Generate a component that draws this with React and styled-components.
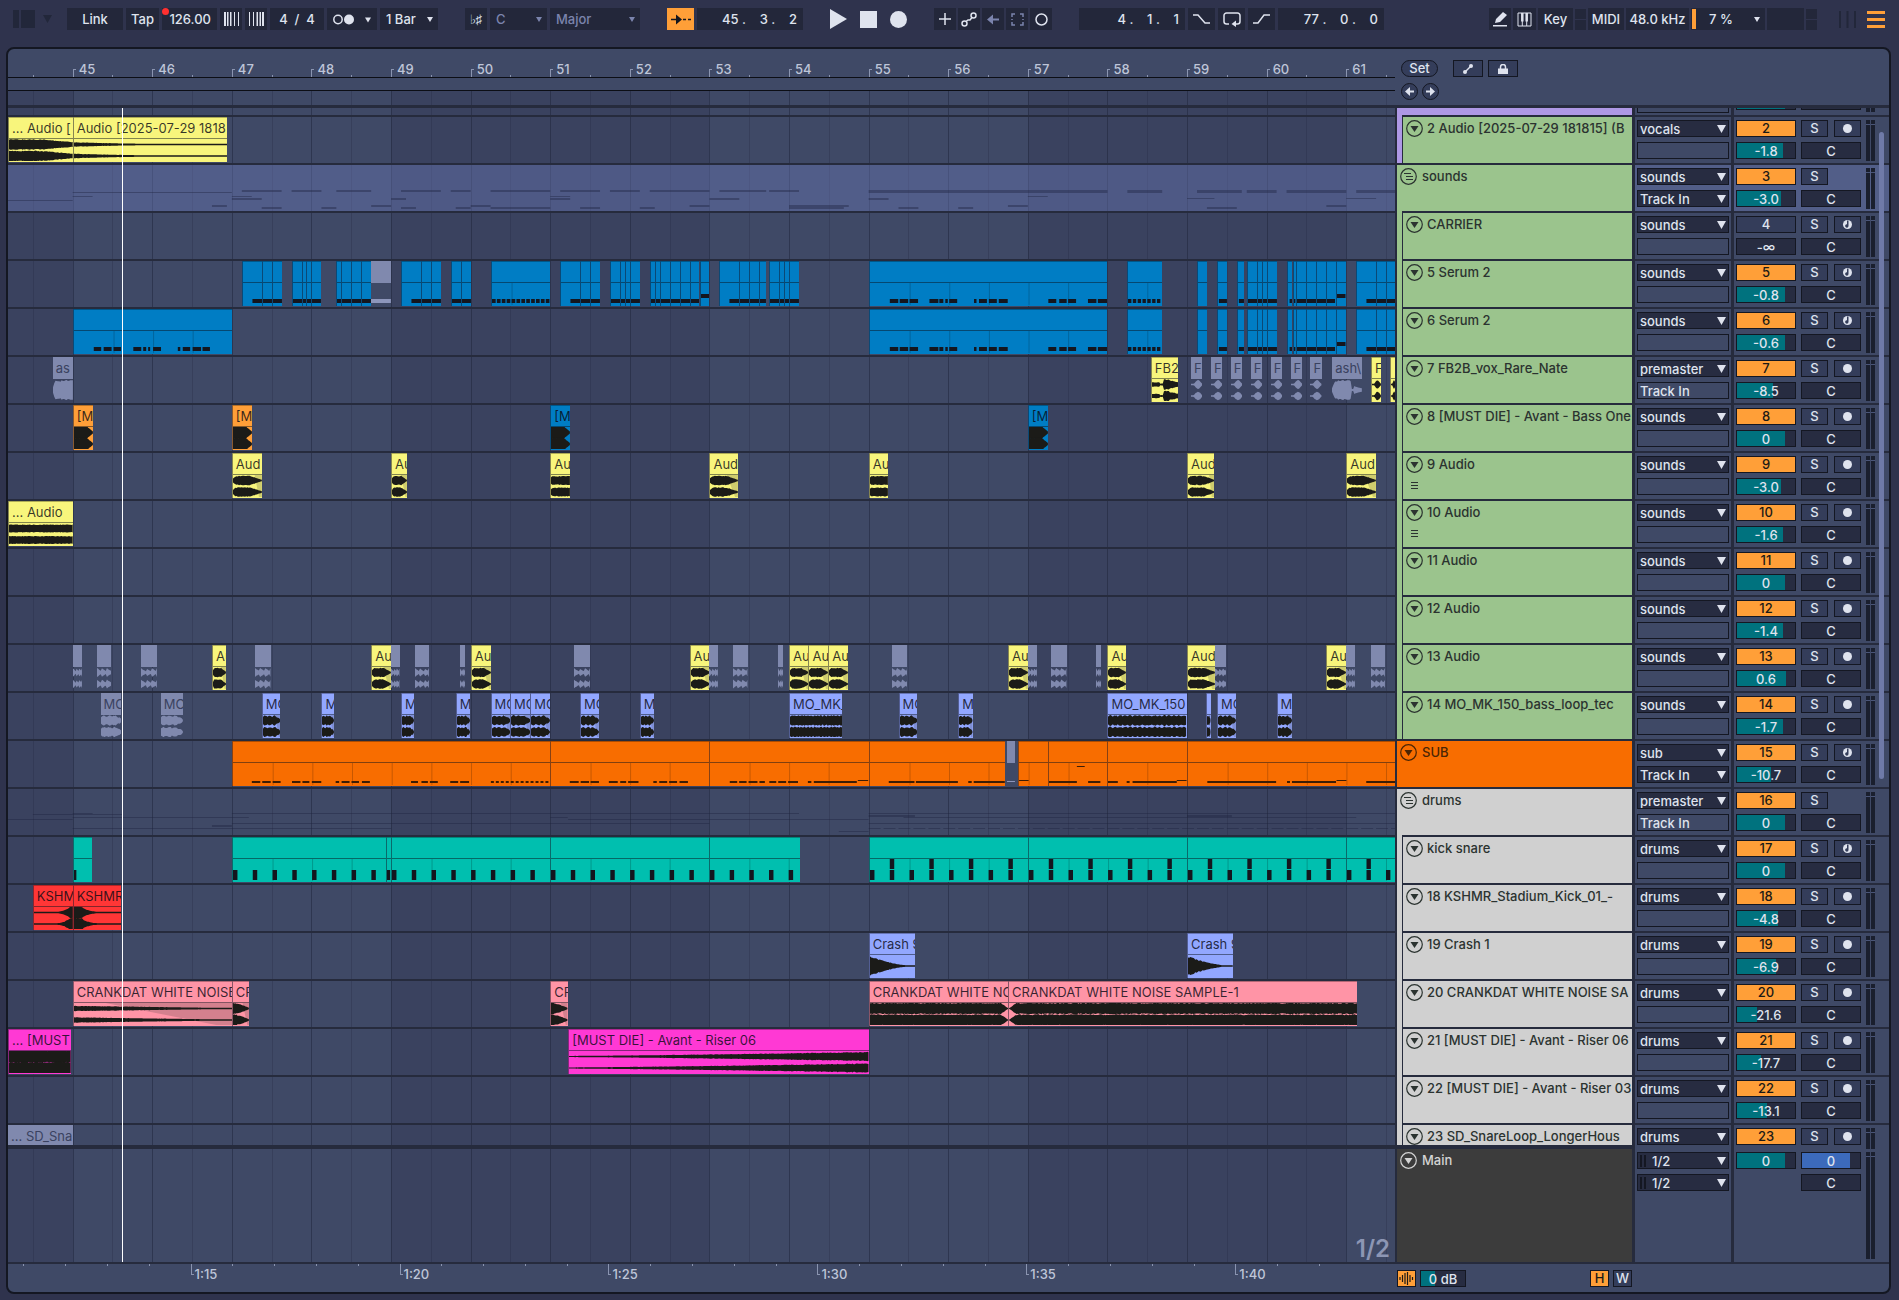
import React from 'react';
import styled, { createGlobalStyle, css } from 'styled-components';

const DARK = '#262b3d';
const EDGE = '#141722';
const PANEL = '#3f4966';
const TEXT = '#dfe3ee';
const AMBER = '#ff9f38';
const TEAL = '#00727e';

const YELLOW = '#f8f57c';
const BLUE = '#007dc4';
const GREEN = '#9bc48d';
const GREY = '#d0d0d0';
const PURPLE = '#ae98e5';
const ORANGE = '#f86d00';
const MINT = '#00bfaf';
const RED = '#ff3636';
const PINK = '#ff94a6';
const MAGENTA = '#ff39d4';
const PERI = '#92a7ff';
const MUTED = '#8089ae';

// Timeline positions are counted in sixteenths from bar 45.
const START = -13;
const SPAN = 278.8;
const pct = (s) => `${((s - START) / SPAN) * 100}%`;
const pctWidth = (len) => `${(len / SPAN) * 100}%`;

const GlobalStyle = createGlobalStyle`
  * {
    box-sizing: border-box;
  }
  body {
    margin: 0;
    background: #2f334d;
    color: ${TEXT};
    font: 500 13px/17px Inter, 'Open Sans', sans-serif;
  }
  button, input, select {
    margin: 0;
    padding: 0;
    border: 0;
    border-radius: 0;
    color: inherit;
    font: inherit;
  }
  svg {
    display: block;
  }
`;

const Page = styled.div`
  padding: 0 8px 6px 6px;
`;

/* ---------- control bar ---------- */

const ControlBar = styled.header`
  display: flex;
  align-items: center;
  gap: 27px;
  height: 47px;
  padding: 0 6px 9px 7px;
`;

const Group = styled.div`
  display: flex;
  align-items: center;
  gap: ${(props) => props.$gap || 3}px;
  margin-left: ${(props) => (props.$end ? 'auto' : '0')};
`;

const BarButton = styled.button`
  display: flex;
  align-items: center;
  justify-content: center;
  flex: none;
  width: ${(props) => props.$w}px;
  height: 22px;
  background: ${(props) => (props.$on ? AMBER : '#23273a')};
  color: ${(props) => (props.$on ? '#14161e' : props.$dim ? '#7b84ad' : TEXT)};
`;

const GhostButton = styled(BarButton)`
  background: none;
`;

const ViewButton = styled(GhostButton)`
  justify-content: flex-end;
`;

const BarField = styled.input`
  width: ${(props) => props.$w}px;
  height: 22px;
  background: #23273a;
  text-align: ${(props) => props.$align || 'center'};
  padding-right: ${(props) => (props.$align === 'right' ? 6 : 0)}px;
  white-space: pre;
`;

const TempoWrap = styled.div`
  position: relative;
`;

const TempoDot = styled.span`
  position: absolute;
  left: 0;
  top: 0;
  width: 7px;
  height: 7px;
  border-radius: 50%;
  background: #ff3030;
`;

const SelectWrap = styled.div`
  position: relative;
  width: ${(props) => (props.$w ? `${props.$w}px` : 'auto')};
  color: ${(props) => (props.$dim ? '#7b84ad' : TEXT)};

  svg {
    position: absolute;
    right: ${(props) => (props.$w ? 5 : 3)}px;
    top: ${(props) => (props.$w ? 9 : 5)}px;
    pointer-events: none;
  }
`;

const BarSelect = styled.select`
  appearance: none;
  width: 100%;
  height: 22px;
  padding-left: 6px;
  background: #23273a;
`;

const Stack = styled.div`
  display: grid;
  gap: 1px;
  width: 11px;

  span {
    height: 10px;
    background: #23273a;
  }
`;

const CpuMeter = styled.div`
  display: flex;
  align-items: center;
  justify-content: space-between;
  width: 74px;
  height: 22px;
  padding: 1px 5px 1px 1px;
  background: #23273a;

  i {
    width: 4px;
    height: 20px;
    background: ${AMBER};
  }

  span {
    margin-right: 8px;
  }
`;

const EmptyBox = styled.div`
  width: 37px;
  height: 22px;
  background: #23273a;
`;

/* ---------- arrangement frame ---------- */

const Panel = styled.main`
  border: 2px solid ${EDGE};
  border-radius: 8px;
  background: ${PANEL};
  overflow: hidden;
`;

const Head = styled.div`
  display: flex;
  height: 59px;
  border-bottom: 3px solid ${DARK};
`;

const RulerColumn = styled.div`
  flex: 1;
  min-width: 0;
`;

const BarRuler = styled.div`
  position: relative;
  height: 29px;
  border-bottom: 1px solid #0c0e15;
  overflow: hidden;
`;

const LoopStrip = styled.div`
  height: 13px;
  border-bottom: 1px solid #0c0e15;
`;

const ScrubStrip = styled.div`
  position: relative;
  height: 14px;
`;

const BarMark = styled.span`
  position: absolute;
  bottom: 0;
  width: 3px;
  height: 8px;
  border-left: 1px solid #8a94b0;
  border-top: 1px solid #8a94b0;
`;

const HalfMark = styled.span`
  position: absolute;
  bottom: 0;
  width: 1px;
  height: 2px;
  background: #8a94b0;
`;

const BarNumber = styled.span`
  position: absolute;
  bottom: -1px;
  padding-left: 6px;
  color: #bec5d8;
`;

const HeadTools = styled.div`
  display: flex;
  flex-direction: column;
  gap: 6px;
  width: 494px;
  padding: 11px 0 0 6px;
`;

const ToolRow = styled.div`
  display: flex;
  gap: ${(props) => props.$gap}px;
`;

const ToolButton = styled.button`
  display: flex;
  align-items: center;
  justify-content: center;
  width: ${(props) => props.$w}px;
  height: 17px;
  border: 1px solid ${EDGE};
  border-radius: ${(props) => (props.$round ? 9 : 0)}px;
  margin-right: ${(props) => props.$after || 0}px;
  background: #343d5a;
  line-height: 15px;
`;

const Body = styled.div`
  position: relative;
`;

const Backdrop = styled.div`
  position: absolute;
  inset: 0 ${(props) => props.$right || 0}px 0 0;
  overflow: hidden;
`;

const Shade = styled.span`
  position: absolute;
  top: 0;
  bottom: 0;
  background: #3a425f;
`;

const GridLine = styled.span`
  position: absolute;
  top: 0;
  bottom: 0;
  width: 1px;
  background: rgba(30, 36, 58, ${(props) => (props.$strong ? 0.5 : 0.25)});
`;

const Playhead = styled.span`
  position: absolute;
  top: 0;
  bottom: 0;
  width: 1px;
  background: #fff;
`;

const PlayheadLayer = styled.div`
  position: absolute;
  inset: 0 494px 2px 0;
  pointer-events: none;
`;

const ScrollThumb = styled.span`
  position: absolute;
  right: 5px;
  top: 24px;
  width: 5px;
  height: 56%;
  border-radius: 3px;
  background: #6f7aa8;
`;

/* ---------- track rows ---------- */

const Row = styled.div`
  position: relative;
  display: flex;
  height: ${(props) => props.$h}px;
  align-items: ${(props) => (props.$fromEnd ? 'flex-end' : 'stretch')};
  overflow: hidden;
`;

const cell = css`
  border-bottom: ${(props) => (props.$thick ? 4 : 2)}px solid ${DARK};
  background: ${(props) => (props.$lit ? '#525e88' : 'transparent')};
`;

const Lane = styled.div`
  ${cell}
  position: relative;
  flex: 1;
  min-width: 0;
  overflow: hidden;
  background: ${(props) => (props.$lit ? 'rgba(110, 126, 190, 0.4)' : 'transparent')};
`;

const HeaderCell = styled.div`
  position: relative;
  width: 237px;
  border-left: 2px solid ${DARK};
  padding-left: ${(props) => (props.$child ? 5 : 0)}px;
  background: ${(props) => props.$color};

  &::after {
    content: '';
    position: absolute;
    left: ${(props) => (props.$last ? 0 : 5)}px;
    right: 0;
    bottom: 0;
    height: ${(props) => (props.$thick ? 4 : 2)}px;
    background: ${DARK};
  }
`;

const HeaderBody = styled.div`
  display: grid;
  grid-template-columns: 17px 1fr;
  column-gap: ${(props) => (props.$child ? 4 : 5)}px;
  row-gap: 6px;
  align-content: start;
  height: 100%;
  min-height: 46px;
  padding: 3px 0 0 3px;
  border-left: ${(props) => (props.$child ? 1 : 0)}px solid ${DARK};
  background: ${(props) => props.$color};
  color: ${(props) => props.$ink || '#2b3330'};
`;

const TrackName = styled.span`
  overflow: hidden;
  white-space: nowrap;
`;

const FoldButton = styled.button`
  width: 17px;
  height: 17px;
  background: none;
`;

const IoCell = styled.div`
  ${cell}
  display: grid;
  grid-auto-rows: 17px;
  align-content: start;
  row-gap: 5px;
  width: 99px;
  padding: 3px 2px 0;
  border-left: 3px solid ${DARK};
  min-height: 46px;
`;

const IoSelect = styled.select`
  appearance: none;
  width: 100%;
  height: 17px;
  padding-left: ${(props) => (props.$inset ? 14 : 2)}px;
  border: 1px solid ${EDGE};
  background: ${(props) => (props.$plain ? PANEL : '#272c41')};
  opacity: 1;
  color: ${TEXT};
`;

const IoBlank = styled.div`
  border: 1px solid ${EDGE};
  background: ${PANEL};
`;

const OutMeter = styled.i`
  position: absolute;
  left: 3px;
  top: 3px;
  width: 6px;
  height: 12px;
  border-left: 2px solid ${EDGE};
  border-right: 2px solid ${EDGE};
`;

const MixCell = styled.div`
  ${cell}
  display: grid;
  grid-template-columns: 60px 60px 9px;
  grid-template-rows: 17px 17px 1fr;
  gap: 5px;
  width: 158px;
  padding: 3px 0 0 2px;
  border-left: 3px solid ${DARK};
  min-height: 46px;
`;

const mixBox = css`
  border: 1px solid ${EDGE};
  height: 17px;
  line-height: 15px;
  text-align: center;
`;

const NumberButton = styled.button`
  ${mixBox}
  background: ${(props) => (props.$on ? AMBER : '#343d5a')};
  color: ${(props) => (props.$on ? '#1c1a16' : TEXT)};
`;

const ValueField = styled.input`
  ${mixBox}
  width: ${(props) => props.$w || 60}px;
  background: #272c41;
`;

const Toggles = styled.div`
  display: flex;
  justify-content: space-between;
`;

const SmallToggle = styled.button`
  ${mixBox}
  display: flex;
  align-items: center;
  justify-content: center;
  width: 27px;
  background: #343d5a;
`;

const Meter = styled.div`
  display: grid;
  grid-template-columns: 4px 4px;
  gap: 1px;
  grid-column: 3;
  grid-row: 1 / 4;
  margin-bottom: 3px;

  i {
    background: linear-gradient(#1a1f2e 4px, #4a5578 4px, #4a5578 5px, #1a1f2e 5px);
  }
`;

const ClipBox = styled.div`
  position: absolute;
  top: 0;
  height: 45px;
  overflow: hidden;
  border-left: ${(props) => (props.$muted ? 0 : 1)}px solid rgba(20, 22, 40, 0.5);
  background: ${(props) => (props.$muted ? 'transparent' : props.$color)};
`;

const ClipTitle = styled.div`
  height: ${(props) => (props.$muted ? 22 : 21)}px;
  padding-left: 3px;
  overflow: hidden;
  background: ${(props) => props.$color};
  border-top: 1px solid ${(props) => (props.$muted ? 'transparent' : 'rgba(0, 0, 0, 0.3)')};
  color: ${(props) => (props.$muted ? '#3a4260' : 'rgba(10, 10, 20, 0.82)')};
  font-weight: 400;
  line-height: 20px;
  white-space: nowrap;
`;

const ClipBody = styled.div`
  height: 23px;
  border-top: ${(props) => (props.$muted ? 0 : 1)}px solid rgba(10, 20, 30, 0.5);

  svg {
    width: 100%;
    height: 22px;
  }
`;

const GhostSvg = styled.svg`
  position: absolute;
  inset: 0;
  width: 100%;
  height: 46px;
`;

const GridLabel = styled.span`
  position: absolute;
  right: 5px;
  bottom: 3px;
  color: #8d96b4;
  font-size: 24px;
  font-weight: 600;
  line-height: 20px;
`;

/* ---------- bottom strip ---------- */

const Foot = styled.footer`
  display: flex;
  height: 28px;
`;

const TimeRuler = styled.div`
  position: relative;
  flex: 1;
  min-width: 0;
  overflow: hidden;
  color: #bec5d8;
`;

const TimeTick = styled.span`
  position: absolute;
  top: 0;
  width: ${(props) => (props.$major ? 3 : 1)}px;
  height: ${(props) => (props.$major ? 11 : 2)}px;
  border-left: 1px solid #8a94b0;
  border-bottom: ${(props) => (props.$major ? 1 : 0)}px solid #8a94b0;
`;

const TimeText = styled.span`
  position: absolute;
  top: 2px;
  padding-left: 4px;
`;

const FootTools = styled.div`
  display: flex;
  gap: 4px;
  width: 494px;
  padding: 6px 257px 0 2px;
`;

const FootButton = styled.button`
  display: flex;
  align-items: center;
  justify-content: center;
  width: 19px;
  height: 17px;
  border: 1px solid ${EDGE};
  margin-left: ${(props) => (props.$push ? 'auto' : '0')};
  background: ${(props) => (props.$on ? AMBER : '#343d5a')};
  color: ${(props) => (props.$on ? '#1c1a16' : TEXT)};
  line-height: 15px;
`;

/* ---------- drawings ---------- */

const Caret = ({ small }) =>
  small ? (
    <svg width="6" height="5" viewBox="0 0 6 5">
      <path d="M0 0h6L3 5z" fill="currentColor" />
    </svg>
  ) : (
    <svg width="9" height="8" viewBox="0 0 9 8">
      <path d="M0 0h9L4.500 8z" fill="currentColor" />
    </svg>
  );

const FoldIcon = ({ group }) => (
  <svg width="17" height="17" viewBox="0 0 17 17" fill="none" stroke="currentColor">
    <circle cx="8.500" cy="8.500" r="7.800" strokeWidth="1.200" />
    {group ? (
      <path d="M4 5.500h7M6 8.500h7M6 11.500h7" strokeWidth="1.100" />
    ) : (
      <path d="M4.500 6h8L8.500 12z" fill="currentColor" stroke="none" />
    )}
  </svg>
);

const ArmIcon = ({ midi }) => (
  <svg width="11" height="11" viewBox="0 0 11 11">
    <circle cx="5.500" cy="5.500" r="4.500" fill={TEXT} />
    {midi && <path d="M5 1.500h1.500v5.500a1.700 1.700 0 1 1-1.500-1.700z" fill="#343d5a" />}
  </svg>
);

const LinesIcon = () => (
  <svg width="17" height="11" viewBox="0 0 17 11" stroke="currentColor">
    <path d="M5 3.500h7M5 6.500h7M5 9.500h7" />
  </svg>
);

const noise = (n) => {
  const v = Math.sin(n * 127.1) * 43758.5453;
  return v - Math.floor(v);
};

const ENVELOPES = {
  tailA: (t) => (t < 0.5 ? 1 : 1 - (t - 0.5) * 1.1),
  tailB: (t) => Math.max(0.12, 0.42 * Math.pow(1 - t, 2.2)),
  mid: () => 0.75,
  pluck: (t) => (t < 0.1 ? 0.4 + t * 5 : t < 0.6 ? 0.9 : 0.9 - (t - 0.6) * 2),
  punch: (t) => (t < 0.65 ? 1.3 : 1.3 - (t - 0.65) * 3.2),
  block: (t) => (t < 0.05 ? 0.6 : 0.85),
  ash: (t) => (t < 0.1 ? 0.3 + t * 8 : 1.1),
  ashTail: (t) => (t < 0.1 ? 0.2 + t * 9 : t < 0.65 ? 1.1 : t < 0.72 ? 0.1 : 0.45 - (t - 0.72)),
  vox: (t) => (t < 0.3 ? 0.4 : t < 0.42 ? 0.15 : t < 0.65 ? 1 : 0.8 - (t - 0.65)),
  dot: (t) => Math.max(0.1, 0.85 * Math.sin(Math.PI * Math.max(0, t * 1.3 - 0.3))),
  beats: (t) => 0.15 + 0.7 * (1 - ((t * 3) % 1)),
  loop: (t) => 0.7 + 0.3 * Math.abs(Math.sin(t * 12)) - (t > 0.75 ? (t - 0.75) * 3 : 0),
  longLoop: (t) => 0.8 + 0.25 * Math.abs(Math.sin(t * 50)),
  swell: (t) => Math.max(0.1, Math.min(1.2, Math.exp((t - 0.95) * 7) * 1.4)),
  drop: (t) => Math.max(0.1, Math.min(1.2, Math.exp(-(t - 0.15) * 7) * 1.2)),
  crash: (t) => Math.max(0.06, Math.pow(1 - t, 1.8) * 1.1),
  fadeOut: (t) => Math.max(0.1, 0.5 * (1 - t * 0.9)),
  hit: (t) => 1.1 - Math.pow(t, 1.6),
  riser: (t) => 0.08 + 0.8 * Math.pow(t, 1.3),
  solid: () => 1.2,
  toDip: (t) => (t > 0.95 ? Math.max(0, (1 - t) * 20) : 1.08),
  fromDip: (t) => (t < 0.02 ? t * 54 : 1.08),
};

const Wave = ({ kind, len, color, mono, fade }) => {
  const steps = Math.max(10, Math.round(len * 4));
  const env = ENVELOPES[kind];
  const centers = mono ? [11] : [5.5, 17];
  const amp = mono ? 9 : 5.2;
  const shapes = centers.map((cy, c) => {
    const up = [];
    const down = [];
    for (let i = 0; i <= steps; i += 1) {
      const t = i / steps;
      const a = env(t) * amp * (0.82 + 0.18 * noise(i + c * 31 + len)) + 0.2;
      const x = (t * len).toFixed(2);
      up.push(`${x},${(cy - a).toFixed(2)}`);
      down.unshift(`${x},${(cy + a).toFixed(2)}`);
    }
    return up.concat(down).join(' ');
  });
  return (
    <svg viewBox={`0 0 ${len} 22`} preserveAspectRatio="none">
      {fade && <polygon points={`${len * fade},0 ${len},0 ${len},22 ${len * 0.9},22`} fill="rgba(60,60,60,.22)" />}
      {shapes.map((points) => (
        <polygon key={points} points={points} fill={color} />
      ))}
    </svg>
  );
};

// notes: [from, to, y, height] with absolute sixteenths
const Notes = ({ from, to, notes, lines, ink }) => (
  <svg viewBox={`${from} 0 ${to - from} 22`} preserveAspectRatio="none">
    {lines.map((s) => (
      <rect key={s} x={s} y="0" width=".2" height="22" fill="rgba(0,0,0,.2)" />
    ))}
    {notes
      .filter((n) => n[1] > from && n[0] < to)
      .map(([a, b, y, h]) => (
        <rect key={`${a}-${y}`} x={a} y={y} width={b - a} height={h} fill={ink} />
      ))}
  </svg>
);

/* ---------- session data ---------- */

const audio = (from, to, name, color, kind, more = {}) => ({ from, to, name, color, kind, ...more });
const mute = (from, to, kind = 'beats', name = '') => ({ from, to, name, color: MUTED, kind, muted: true });

const spread = (pairs, y, h) => pairs.map(([a, b]) => [a, b, y, h]);

const steps = (from, to, gap, width, y, h) => {
  const out = [];
  for (let s = from; s < to; s += gap) out.push([s, s + width, y, h]);
  return out;
};

const phrase = [
  [164, 165.7], [166, 167.7], [168, 169.7], [172, 173.8], [174, 174.8], [175.2, 175.7], [176, 177.6],
  [181, 181.5], [182, 183.6], [184, 185.6], [186, 187.8], [196, 197.6], [198.2, 199.7], [200, 201.6],
  [204, 205.7], [206, 208],
];

const stabs = [
  ...spread([[230.2, 232], [234.2, 235.4], [236, 242], [244.4, 245], [245.3, 245.7], [246, 253.8], [260, 266]], 16, 4),
  [254, 255.9, 11, 4],
  ...steps(212, 219, 1, 0.7, 16, 4),
];

const serumNotes = [
  ...spread([[36, 42], [44, 50], [53, 60], [68, 74], [76, 80], [100, 106], [108, 114], [116, 126], [132, 139.4], [140, 146]], 16, 4),
  [126, 128, 11, 4],
  ...steps(84, 96, 1, 0.75, 16, 4),
  ...spread(phrase, 16, 4),
  ...stabs,
];

const serumLow = [
  ...spread([[4, 5.5], [6, 7.6], [8, 9.5], [12, 13.6], [14, 14.6], [15, 15.4], [16, 17.6], [21, 21.5], [22, 23.5], [24, 25.7], [26, 27.5]], 16, 4),
  ...spread(phrase, 16, 4),
  ...stabs,
];

const midi = (ranges, color, notes, ink = '#14161e') =>
  ranges.map(([from, to]) => ({ from, to, color, notes, ink, name: '' }));

const chop = (...marks) => marks.slice(0, -1).map((m, i) => [m, marks[i + 1]]);

const stabRanges = [
  [212, 219], [226, 228], [230, 232], [234, 235.4], ...chop(236, 238, 239, 240, 242), [244, 245],
  ...chop(245.3, 246, 248, 250, 252, 254, 256), ...chop(258, 262, 264, 266),
];

const serumRanges = [
  ...chop(34, 38, 40, 42), ...chop(44, 46, 47, 48, 50), ...chop(53, 54, 56, 58, 60), ...chop(66, 70, 72, 74),
  ...chop(76, 78, 80), [84, 96], ...chop(98, 102, 104, 106), ...chop(108, 110, 111, 112, 114),
  ...chop(116, 117, 118, 120, 122, 124, 126, 128), ...chop(130, 134, 136, 138, 139.4), ...chop(140, 142, 143, 144, 146),
  [160, 208], ...stabRanges,
];

const subNotes = [
  ...spread([
    [35.8, 37.5], [37.9, 39.6], [40, 41.6], [43.9, 45.6], [46, 47.4], [47.9, 49.8], [52.7, 53.4], [53.9, 55.5],
    [55.9, 57.4], [58, 59.6], [67.9, 69.3], [70, 71.3], [71.7, 73.3], [75.8, 77.4], [77.8, 79.6], [99.8, 101.6],
    [102, 103.7], [104, 105.7], [107.7, 109.5], [110, 111.2], [111.6, 113.7], [116.7, 117.4], [117.9, 119.5],
    [119.9, 121.5], [122, 123.7], [132, 133.5], [133.9, 135.4], [135.8, 137.6], [138, 139.1], [140, 141.4],
    [141.8, 143.4], [143.8, 145.8], [147.8, 148.5], [149, 157.7], [163.8, 169], [169.3, 177.8], [179.9, 180.6],
    [181, 187.3], [196, 201.7], [204, 206.5], [208, 210], [211.8, 212.4], [213, 222], [227.9, 241.8],
    [244, 244.6], [245, 253.9], [260, 266],
  ], 18, 2),
  ...spread([[157.9, 160], [190, 192], [222, 224], [254, 256]], 17, 1),
  [201.7, 203.3, 3, 1],
  ...steps(84, 96, 1, 0.6, 18, 2),
];

const kickNotes = [
  ...steps(0, 1, 4, 0.5, 11, 10),
  ...steps(32, 146, 4, 0.9, 11, 10),
  [63, 63.8, 11, 10],
  ...steps(160, 266, 4, 0.9, 11, 10),
  ...steps(164, 266, 8, 0.9, 0, 10),
];

const groupGhost = [
  [-14, 0, 35, 1], [0, 32, 27, 1], [0, 4, 31, 1], [28, 31, 40, 2],
  ...spread([[34, 42], [44, 50], [53, 60], [66, 74], [76, 80], [84, 96], [98, 106], [108, 114], [116, 128], [130, 139.4], [140, 146]], 25, 2),
  ...spread([[32, 36], [96, 100]], 31, 1),
  ...spread([[32, 38], [64, 67], [96, 100], [128, 134], [160, 164]], 33, 2),
  ...spread([[38, 42], [50, 53], [66, 69], [77, 80], [84, 96], [102, 106], [114, 117], [144, 155], [166, 170], [178, 181], [228, 234]], 42, 2),
  ...spread([[60, 64], [80, 84], [124, 128], [144, 156], [188, 192], [252, 256]], 40, 2),
  [160, 208, 25, 3], [192, 196, 31, 1], [212, 219, 25, 3], [224, 229.5, 33, 1], [226, 235, 25, 3],
  [236, 242, 25, 3], [244, 256, 25, 3], [256, 262, 33, 1], [258, 266, 25, 3],
];

const drumGhost = [
  [-8, 10, 25, 1], [-14, 0, 30, 1], [0, 4, 24, 1], [0, 35.4, 28, 1], [0, 64, 39, 1], [28, 32, 36, 2],
  [32, 146, 24, 1], [32, 128, 34, 1], [96, 99.5, 28, 1], [99.6, 160, 30, 1], [154, 160, 42, 1],
  [160, 266, 24, 1], [160, 169.3, 26, 2], [167, 258, 28, 1], [160, 266, 34, 1], [224, 233, 26, 2],
  ...steps(160, 266, 3, 2.4, 39, 1),
];

const tracks = [
  { num: '2', name: '2 Audio [2025-07-29 181815] (B', color: GREEN, strip: PURPLE, out: 'vocals', vol: '-1.8', fill: 79, arm: 'audio', last: true,
    clips: [audio(START, 0, '... Audio [', YELLOW, 'tailA'), audio(0, 31, 'Audio [2025-07-29 1818', YELLOW, 'tailB')] },
  { num: '3', name: 'sounds', color: GREEN, group: true, lit: true, out: 'sounds', sub: 'Track In', subArrow: true, vol: '-3.0', fill: 76, ghost: groupGhost },
  { num: '4', name: 'CARRIER', color: GREEN, out: 'sounds', vol: '-∞', fill: 0, off: true, arm: 'midi' },
  { num: '5', name: '5 Serum 2', color: GREEN, out: 'sounds', vol: '-0.8', fill: 82, arm: 'midi',
    clips: [...midi(serumRanges, BLUE, serumNotes), { from: 60, to: 64, color: MUTED, name: '', muted: true, notes: [[60, 64, 16, 4]], ink: '#8d96bb' }] },
  { num: '6', name: '6 Serum 2', color: GREEN, out: 'sounds', vol: '-0.6', fill: 82, arm: 'midi',
    clips: midi([[0, 32], [160, 208], ...stabRanges], BLUE, serumLow) },
  { num: '7', name: '7 FB2B_vox_Rare_Nate', color: GREEN, out: 'premaster', sub: 'Track In', vol: '-8.5', fill: 62, arm: 'audio',
    clips: [
      { ...mute(-4, 0, 'ash', 'as'), mono: true }, audio(216.7, 222.2, 'FB2', YELLOW, 'vox'),
      ...[224.8, 228.8, 232.8, 236.8, 240.8, 244.8, 248.8].map((s) => mute(s, s + 2.3, 'dot', 'F')),
      { ...mute(253.2, 259.2, 'ashTail', 'ash\\'), mono: true }, audio(261, 263, 'F', YELLOW, 'dot'), audio(264.8, 266, '', YELLOW, 'dot'),
    ] },
  { num: '8', name: '8 [MUST DIE] - Avant - Bass One', color: GREEN, out: 'sounds', vol: '0', fill: 82, arm: 'audio',
    clips: [
      audio(0, 4, '[M', AMBER, 'punch'), audio(32, 36, '[M', AMBER, 'punch'),
      audio(96, 100, '[M', BLUE, 'punch'), audio(192, 196, '[M', BLUE, 'punch'),
    ] },
  { num: '9', name: '9 Audio', color: GREEN, out: 'sounds', vol: '-3.0', fill: 76, arm: 'audio', takes: true,
    clips: [
      audio(32, 38, 'Aud', YELLOW, 'pluck', { fade: 0.75 }), audio(64, 67.2, 'Au', YELLOW, 'pluck', { fade: 0.6 }),
      audio(96, 100, 'Au', YELLOW, 'block'), audio(128, 133.8, 'Aud', YELLOW, 'pluck', { fade: 0.6 }),
      audio(160, 163.8, 'Au', YELLOW, 'block'), audio(224, 229.5, 'Aud', YELLOW, 'pluck', { fade: 0.8 }),
      audio(256, 262, 'Aud', YELLOW, 'pluck', { fade: 0.6 }),
    ] },
  { num: '10', name: '10 Audio', color: GREEN, out: 'sounds', vol: '-1.6', fill: 80, arm: 'audio', takes: true,
    clips: [audio(START, 0, '... Audio', YELLOW, 'mid')] },
  { num: '11', name: '11 Audio', color: GREEN, out: 'sounds', vol: '0', fill: 82, arm: 'audio' },
  { num: '12', name: '12 Audio', color: GREEN, out: 'sounds', vol: '-1.4', fill: 80, arm: 'audio' },
  { num: '13', name: '13 Audio', color: GREEN, out: 'sounds', vol: '0.6', fill: 85, arm: 'audio',
    clips: [
      ...[[0, 1.8], [4.8, 7.8], [13.7, 16.9], [36.7, 39.8], [64, 65.7], [68.9, 71.7], [77.8, 78.8], [100.7, 103.9], [128, 129.8],
        [132.8, 135.7], [141.7, 142.8], [164.7, 167.8], [192, 193.8], [196.7, 199.8], [205.7, 206.8], [229.6, 231.9],
        [256, 257.8], [260.9, 263.7]].map(([a, b]) => mute(a, b)),
      ...[[28, 30.8], [60, 64], [80, 84], [124, 128], [144, 147.9], [147.9, 151.9], [151.9, 155.9], [188, 192], [208, 211.8],
        [224, 229.6], [252, 256]].map(([a, b]) => audio(a, b, b - a > 5 ? 'Aud' : 'Au', YELLOW, 'pluck', { fade: 0.6 })),
    ] },
  { num: '14', name: '14 MO_MK_150_bass_loop_tec', color: GREEN, out: 'sounds', vol: '-1.7', fill: 80, arm: 'audio', last: true,
    clips: [
      mute(5.6, 9.8, 'loop', 'MO'), mute(17.7, 22.1, 'loop', 'MO'),
      ...[[38, 41.7], [50, 52.6], [66, 68.6], [77, 79.8], [84, 87.9], [87.9, 92], [92, 96], [102, 105.8], [114, 116.8], [166, 169.7],
        [178, 180.9], [227.9, 228.8], [230, 233.8], [242, 245]].map(([a, b]) => audio(a, b, b - a > 3.2 ? 'MO' : b - a > 1 ? 'M' : '', PERI, 'loop', { fade: 0.7 })),
      audio(144, 154.7, 'MO_MK_', PERI, 'longLoop'), audio(208, 223.9, 'MO_MK_150', PERI, 'longLoop'),
    ] },
  { num: '15', name: 'SUB', color: ORANGE, solo: true, ink: '#4a2505', out: 'sub', sub: 'Track In', subArrow: true, vol: '-10.7', fill: 58, arm: 'midi', last: true,
    clips: [
      ...midi([...chop(32, 96, 128, 160, 187.4), ...chop(190, 196, 208, 224, 266)], ORANGE, subNotes, '#3d1d04'),
      { from: 187.8, to: 189.4, color: MUTED, name: '', muted: true, notes: [[187.8, 189.4, 18, 1]], ink: '#8d96bb' },
    ] },
  { num: '16', name: 'drums', color: GREY, group: true, out: 'premaster', sub: 'Track In', vol: '0', fill: 82, ghost: drumGhost },
  { num: '17', name: 'kick snare', color: GREY, out: 'drums', vol: '0', fill: 82, arm: 'midi',
    clips: midi([[0, 3.8], ...chop(32, 63, 64, 96, 128, 146.2), ...chop(160, 192, 224, 256, 266)], MINT, kickNotes) },
  { num: '18', name: '18 KSHMR_Stadium_Kick_01_-', color: GREY, out: 'drums', vol: '-4.8', fill: 71, arm: 'audio',
    clips: [audio(-8, 0, 'KSHM', RED, 'swell'), audio(0, 9.8, 'KSHMR', RED, 'drop')] },
  { num: '19', name: '19 Crash 1', color: GREY, out: 'drums', vol: '-6.9', fill: 67, arm: 'audio',
    clips: [audio(160, 169.3, 'Crash 9', PERI, 'crash', { mono: true }), audio(224, 233.2, 'Crash 9', PERI, 'crash', { mono: true })] },
  { num: '20', name: '20 CRANKDAT WHITE NOISE SA', color: GREY, out: 'drums', vol: '-21.6', fill: 34, arm: 'audio',
    clips: [
      audio(0, 32, 'CRANKDAT WHITE NOISE', PINK, 'fadeOut', { fade: 0.2 }), audio(32, 35.4, 'CR', PINK, 'hit', { fade: 0.6 }),
      audio(96, 99.5, 'CR', PINK, 'hit', { fade: 0.6 }), audio(160, 188, 'CRANKDAT WHITE NO', PINK, 'toDip'),
      audio(188, 258.2, 'CRANKDAT WHITE NOISE SAMPLE-1', PINK, 'fromDip'),
    ] },
  { num: '21', name: '21 [MUST DIE] - Avant - Riser 06', color: GREY, out: 'drums', vol: '-17.7', fill: 41, arm: 'audio',
    clips: [audio(START, -0.4, '... [MUST', MAGENTA, 'solid'), audio(99.6, 160, '[MUST DIE] - Avant - Riser 06', MAGENTA, 'riser')] },
  { num: '22', name: '22 [MUST DIE] - Avant - Riser 03', color: GREY, out: 'drums', vol: '-13.1', fill: 52, arm: 'audio' },
  { num: '23', name: '23 SD_SnareLoop_LongerHous', color: GREY, out: 'drums', vol: '0', fill: 82, arm: 'audio', last: true, cut: true,
    clips: [mute(START, 0, 'mid', '... SD_Sna')] },
];

const halfBars = Array.from({ length: 35 }, (_, i) => -8 + i * 8);

/* ---------- parts ---------- */

const Grid = ({ right }) => (
  <Backdrop $right={right}>
    {[[START, 0], [64, 128], [192, 256]].map(([a, b]) => (
      <Shade key={a} style={{ left: pct(a), width: pctWidth(b - a) }} />
    ))}
    {halfBars.map((s) => (
      <GridLine key={s} $strong={s % 16 === 0} style={{ left: pct(s) }} />
    ))}
  </Backdrop>
);

const Clip = ({ clip }) => {
  const { from, to, name, color, kind, muted, notes, ink, mono, fade } = clip;
  const len = to - from;
  return (
    <ClipBox $color={color} $muted={muted} style={{ left: pct(from), width: pctWidth(len) }}>
      <ClipTitle $color={color} $muted={muted}>{name}</ClipTitle>
      <ClipBody $muted={muted}>
        {notes ? (
          <Notes from={from} to={to} notes={notes} ink={ink} lines={muted ? [] : halfBars.filter((s) => s > from && s < to)} />
        ) : (
          <Wave kind={kind} len={len} color={muted ? MUTED : '#1b1b18'} mono={mono} fade={fade} />
        )}
      </ClipBody>
    </ClipBox>
  );
};

const Ghost = ({ lines }) => (
  <GhostSvg viewBox={`${START} 0 ${SPAN} 46`} preserveAspectRatio="none">
    {lines.map(([a, b, y, h], i) => (
      <rect key={i} x={a} y={y} width={b - a} height={h} fill="rgba(30,36,62,.4)" />
    ))}
  </GhostSvg>
);

const Chooser = ({ label, value, plain, inset }) => (
  <SelectWrap>
    <IoSelect aria-label={label} $plain={plain} $inset={inset} defaultValue={value}>
      <option>{value}</option>
    </IoSelect>
    {inset && <OutMeter />}
    {!plain && <Caret />}
  </SelectWrap>
);

const volumeFill = (fill, color = TEAL) => ({
  background: `linear-gradient(90deg, ${color} ${fill}%, #272c41 ${fill}%)`,
});

const LevelMeter = () => (
  <Meter>
    <i />
    <i />
  </Meter>
);

const Track = ({ track }) => {
  const { num, name, color, strip, group, solo, lit, out, sub, subArrow, vol, fill, off, arm, takes, last, cut, clips, ghost, ink } = track;
  const child = !group && !solo;
  return (
    <Row $h={cut ? 24 : 48}>
      <Lane $lit={lit} $thick={cut}>
        {ghost && <Ghost lines={ghost} />}
        {clips && clips.map((clip) => <Clip key={`${clip.from}-${clip.muted}`} clip={clip} />)}
      </Lane>
      <HeaderCell $color={strip || color} $child={child} $last={last} $thick={cut}>
        <HeaderBody $color={color} $child={child} $ink={ink}>
          <FoldButton aria-label={`Fold ${name}`}>
            <FoldIcon group={group} />
          </FoldButton>
          <TrackName>{name}</TrackName>
          {takes && <LinesIcon />}
        </HeaderBody>
      </HeaderCell>
      <IoCell $lit={lit} $thick={cut}>
        <Chooser label={`Output of track ${num}`} value={out} />
        {sub ? <Chooser label={`Channel of track ${num}`} value={sub} plain={!subArrow} /> : <IoBlank />}
      </IoCell>
      <MixCell $lit={lit} $thick={cut}>
        <NumberButton $on={!off}>{num}</NumberButton>
        <Toggles>
          <SmallToggle>S</SmallToggle>
          {arm && (
            <SmallToggle aria-label={`Arm track ${num}`}>
              <ArmIcon midi={arm === 'midi'} />
            </SmallToggle>
          )}
        </Toggles>
        {!cut && (
          <>
            <ValueField aria-label={`Volume of track ${num}`} defaultValue={vol} style={volumeFill(fill)} />
            <ValueField aria-label={`Pan of track ${num}`} defaultValue="C" />
          </>
        )}
        <LevelMeter />
      </MixCell>
    </Row>
  );
};

// Lower edge of the track that is scrolled out above the view.
const PeekTrack = () => (
  <Row $h={9} $fromEnd>
    <Lane />
    <HeaderCell $color={PURPLE}>
      <HeaderBody $color={PURPLE} />
    </HeaderCell>
    <IoCell>
      <IoBlank />
      <IoBlank />
    </IoCell>
    <MixCell>
      <span />
      <span />
      <ValueField aria-label="Volume of track 1" defaultValue="" style={volumeFill(82)} />
      <ValueField aria-label="Pan of track 1" defaultValue="" />
      <LevelMeter />
    </MixCell>
  </Row>
);

const MainTrack = () => (
  <Row $h={115}>
    <Lane>
      <GridLabel>1/2</GridLabel>
    </Lane>
    <HeaderCell $color="#3c3c3c" $last>
      <HeaderBody $color="#3c3c3c" $ink="#d4d4d4">
        <FoldButton aria-label="Fold Main">
          <FoldIcon />
        </FoldButton>
        <TrackName>Main</TrackName>
      </HeaderBody>
    </HeaderCell>
    <IoCell>
      <Chooser label="Cue output" value="1/2" inset />
      <Chooser label="Main output" value="1/2" inset />
    </IoCell>
    <MixCell>
      <ValueField aria-label="Main volume" defaultValue="0" style={volumeFill(82)} />
      <ValueField aria-label="Cue volume" defaultValue="0" style={volumeFill(83, '#3c6abb')} />
      <span />
      <ValueField aria-label="Main pan" defaultValue="C" />
      <LevelMeter />
    </MixCell>
  </Row>
);

const iconProps = { fill: 'none', stroke: 'currentColor', strokeWidth: 1.5 };

const Toolbar = () => (
  <ControlBar>
    <Group>
      <GhostButton $w={51} aria-label="Show browser">
        <svg width="51" height="18" viewBox="0 0 51 18" fill="#22273a">
          <path d="M0 0h6v18H0zM8 0h14v18H8zM30 5h9l-4.500 8z" />
        </svg>
      </GhostButton>
      <BarButton $w={56}>Link</BarButton>
      <BarButton $w={33}>Tap</BarButton>
      <TempoWrap>
        <BarField $w={55} $align="right" aria-label="Tempo" defaultValue="126.00" />
        <TempoDot />
      </TempoWrap>
      <BarButton $w={22} aria-label="Nudge down">
        <svg width="15" height="14" viewBox="0 0 15 14" fill="currentColor">
          <path d="M0 0h2v14H0zM3 0h1.500v14H3zM6 0h1.500v14H6zM10 0h1v14h-1zM14 0h1v14h-1z" />
        </svg>
      </BarButton>
      <BarButton $w={22} aria-label="Nudge up">
        <svg width="15" height="14" viewBox="0 0 15 14" fill="currentColor">
          <path d="M0 0h1v14H0zM4 0h1v14H4zM7.500 0H9v14H7.500zM10.500 0H12v14h-1.500zM13 0h2v14h-2z" />
        </svg>
      </BarButton>
      <BarField $w={54} aria-label="Time signature" defaultValue="4  /  4" />
      <BarButton $w={50} aria-label="Metronome">
        <svg width="38" height="11" viewBox="0 0 38 11">
          <circle cx="5" cy="5.500" r="4.200" {...iconProps} />
          <circle cx="16" cy="5.500" r="5" fill="currentColor" />
          <path d="M32 3.500h6l-3 5z" fill="currentColor" />
        </svg>
      </BarButton>
      <SelectWrap $w={58}>
        <BarSelect aria-label="Quantization" defaultValue="1 Bar">
          <option>1 Bar</option>
        </BarSelect>
        <Caret small />
      </SelectWrap>
    </Group>

    <Group>
      <BarButton $w={22} aria-label="Scale mode">♭♯</BarButton>
      <SelectWrap $w={57} $dim>
        <BarSelect aria-label="Root note" defaultValue="C">
          <option>C</option>
        </BarSelect>
        <Caret small />
      </SelectWrap>
      <SelectWrap $w={90} $dim>
        <BarSelect aria-label="Scale" defaultValue="Major">
          <option>Major</option>
        </BarSelect>
        <Caret small />
      </SelectWrap>
    </Group>

    <Group>
      <BarButton $w={27} $on aria-label="Follow">
        <svg width="20" height="11" viewBox="0 0 20 11">
          <path d="M0 5.500h6M12 5.500h3M17 5.500h3" {...iconProps} />
          <path d="M5 .500l6 5-6 5z" fill="currentColor" />
        </svg>
      </BarButton>
      <BarField $w={106} $align="right" aria-label="Position" defaultValue="45 .    3 .    2" />
    </Group>

    <Group $gap={13}>
      <GhostButton $w={17} aria-label="Play">
        <svg width="17" height="20" viewBox="0 0 17 20" fill="currentColor">
          <path d="M0 0l17 10L0 20z" />
        </svg>
      </GhostButton>
      <GhostButton $w={17} aria-label="Stop">
        <svg width="17" height="17" viewBox="0 0 17 17" fill="currentColor">
          <path d="M0 0h17v17H0z" />
        </svg>
      </GhostButton>
      <GhostButton $w={17} aria-label="Record">
        <svg width="17" height="17" viewBox="0 0 17 17" fill="currentColor">
          <circle cx="8.500" cy="8.500" r="8.500" />
        </svg>
      </GhostButton>
    </Group>

    <Group $gap={2}>
      <BarButton $w={22} aria-label="Overdub">
        <svg width="12" height="12" viewBox="0 0 12 12" {...iconProps}>
          <path d="M6 0v12M0 6h12" />
        </svg>
      </BarButton>
      <BarButton $w={22} aria-label="Automation arm">
        <svg width="16" height="15" viewBox="0 0 16 15" {...iconProps}>
          <circle cx="3.500" cy="11.500" r="2.500" />
          <circle cx="12.500" cy="3.500" r="2.500" />
          <path d="M5 9.500l2-1.500 2 0 2-2.500" />
        </svg>
      </BarButton>
      <BarButton $w={22} $dim aria-label="Re-enable automation">
        <svg width="12" height="11" viewBox="0 0 12 11">
          <path d="M3 5.500h9" {...iconProps} strokeWidth="2" />
          <path d="M6 .500v10L0 5.500z" fill="currentColor" />
        </svg>
      </BarButton>
      <BarButton $w={22} $dim aria-label="Capture MIDI">
        <svg width="13" height="13" viewBox="0 0 13 13" {...iconProps}>
          <path d="M1 4V1h3M9 1h3v3M12 9v3H9M4 12H1V9M1 6v1M12 6v1" />
        </svg>
      </BarButton>
      <BarButton $w={22} aria-label="Session record">
        <svg width="13" height="13" viewBox="0 0 13 13" {...iconProps}>
          <circle cx="6.500" cy="6.500" r="5.500" />
        </svg>
      </BarButton>
    </Group>

    <Group>
      <BarField $w={106} $align="right" aria-label="Loop start" defaultValue="4 .    1 .    1" />
      <BarButton $w={27} aria-label="Punch in">
        <svg width="17" height="10" viewBox="0 0 17 10" {...iconProps}>
          <path d="M0 1h5l7 8h5" />
        </svg>
      </BarButton>
      <BarButton $w={27} aria-label="Loop">
        <svg width="18" height="15" viewBox="0 0 18 15" {...iconProps}>
          <path d="M6 12H3.500a2.500 2.500 0 0 1-2.500-2.500v-6A2.500 2.500 0 0 1 3.500 1h11A2.500 2.500 0 0 1 17 3.500v6a2.500 2.500 0 0 1-2.500 2.500H10" />
          <path d="M13 8.500v6.500L8.500 12z" fill="currentColor" stroke="none" />
        </svg>
      </BarButton>
      <BarButton $w={27} aria-label="Punch out">
        <svg width="17" height="10" viewBox="0 0 17 10" {...iconProps}>
          <path d="M0 9h5l6-8h6" />
        </svg>
      </BarButton>
      <BarField $w={106} $align="right" aria-label="Loop length" defaultValue="77 .    0 .    0" />
    </Group>

    <Group $gap={2} $end>
      <BarButton $w={22} aria-label="Draw mode">
        <svg width="15" height="15" viewBox="0 0 15 15" fill="currentColor">
          <path d="M2 11l1-4 7-7 4 3-7 7zM0 13h14v1.500H0z" />
        </svg>
      </BarButton>
      <BarButton $w={23} aria-label="Computer MIDI keyboard">
        <svg width="15" height="15" viewBox="0 0 15 15" {...iconProps}>
          <path d="M1 1h13v13H1zM5.300 9v5M9.700 9v5" strokeWidth="1" />
          <path d="M5.300 1v8.500M9.700 1v8.500" strokeWidth="2.500" />
        </svg>
      </BarButton>
      <BarButton $w={35}>Key</BarButton>
      <Stack>
        <span />
        <span />
      </Stack>
      <BarButton $w={36}>MIDI</BarButton>
      <BarButton $w={63}>48.0 kHz</BarButton>
      <CpuMeter>
        <i />
        <span>7 %</span>
        <Caret small />
      </CpuMeter>
      <EmptyBox />
      <Stack>
        <span />
        <span />
      </Stack>
      <ViewButton $w={66} aria-label="Views">
        <svg width="46" height="17" viewBox="0 0 46 17">
          <path d="M0 0h2v17H0zM7.500 0h2v17h-2zM15 0h2v17h-2z" fill="#22273a" />
          <path d="M28 0h18v3H28zM28 7h18v3H28zM28 14h18v3H28z" fill={AMBER} />
        </svg>
      </ViewButton>
    </Group>
  </ControlBar>
);

const Ruler = () => (
  <Head>
    <RulerColumn>
      <BarRuler>
        {halfBars.map((s) =>
          s % 16 === 0 ? (
            <React.Fragment key={s}>
              <BarMark style={{ left: pct(s) }} />
              <BarNumber style={{ left: pct(s) }}>{45 + s / 16}</BarNumber>
            </React.Fragment>
          ) : (
            <HalfMark key={s} style={{ left: pct(s) }} />
          )
        )}
      </BarRuler>
      <LoopStrip />
      <ScrubStrip>
        <Grid />
      </ScrubStrip>
    </RulerColumn>
    <HeadTools>
      <ToolRow $gap={5}>
        <ToolButton $w={37} $round $after={10}>Set</ToolButton>
        <ToolButton $w={30} aria-label="Automation mode">
          <svg width="10" height="10" viewBox="0 0 10 10" fill="currentColor">
            <circle cx="2" cy="8" r="2" />
            <circle cx="8" cy="2" r="2" />
            <path d="M2 8l6-6" stroke="currentColor" strokeWidth="1.500" />
          </svg>
        </ToolButton>
        <ToolButton $w={30} aria-label="Lock envelopes">
          <svg width="10" height="10" viewBox="0 0 10 10">
            <path d="M2.500 5V3a2.500 2.500 0 0 1 5 0v2" {...iconProps} />
            <path d="M0 4.500h10V10H0z" fill="currentColor" />
          </svg>
        </ToolButton>
      </ToolRow>
      <ToolRow $gap={4}>
        <ToolButton $w={17} $round aria-label="Previous locator">
          <svg width="9" height="9" viewBox="0 0 9 9">
            <path d="M2 4.500h7" {...iconProps} strokeWidth="2" />
            <path d="M5 0v9L0 4.500z" fill="currentColor" />
          </svg>
        </ToolButton>
        <ToolButton $w={17} $round aria-label="Next locator">
          <svg width="9" height="9" viewBox="0 0 9 9">
            <path d="M0 4.500h7" {...iconProps} strokeWidth="2" />
            <path d="M4 0v9l5-4.500z" fill="currentColor" />
          </svg>
        </ToolButton>
      </ToolRow>
    </HeadTools>
  </Head>
);

// Five seconds last 42 sixteenths at 126 BPM.
const Footer = () => (
  <Foot>
    <TimeRuler>
      {Array.from({ length: 32 }, (_, i) => i + 11).map((sec) => {
        const s = 23.7 + (sec - 15) * 8.4;
        return sec % 5 === 0 ? (
          <React.Fragment key={sec}>
            <TimeTick $major style={{ left: pct(s) }} />
            <TimeText style={{ left: pct(s) }}>1:{sec}</TimeText>
          </React.Fragment>
        ) : (
          <TimeTick key={sec} style={{ left: pct(s) }} />
        );
      })}
    </TimeRuler>
    <FootTools>
      <FootButton $on aria-label="Waveform zoom">
        <svg width="15" height="13" viewBox="0 0 15 13" {...iconProps}>
          <path d="M1 5v3M3.500 3v7M6 1v11M8.500 0v13M11 3v7M13.500 5v3" strokeWidth="1.200" />
        </svg>
      </FootButton>
      <ValueField $w={46} aria-label="Waveform gain" defaultValue="0 dB" style={volumeFill(32)} />
      <FootButton $on $push>H</FootButton>
      <FootButton>W</FootButton>
    </FootTools>
  </Foot>
);

const App = () => {
  return (
    <Page>
      <GlobalStyle />
      <Toolbar />
      <Panel>
        <Ruler />
        <Body>
          <Grid right={494} />
          <PeekTrack />
          {tracks.map((track) => (
            <Track key={track.num} track={track} />
          ))}
          <MainTrack />
          <PlayheadLayer>
            <Playhead style={{ left: pct(9.9) }} />
          </PlayheadLayer>
          <ScrollThumb />
        </Body>
        <Footer />
      </Panel>
    </Page>
  );
};

export default App;
